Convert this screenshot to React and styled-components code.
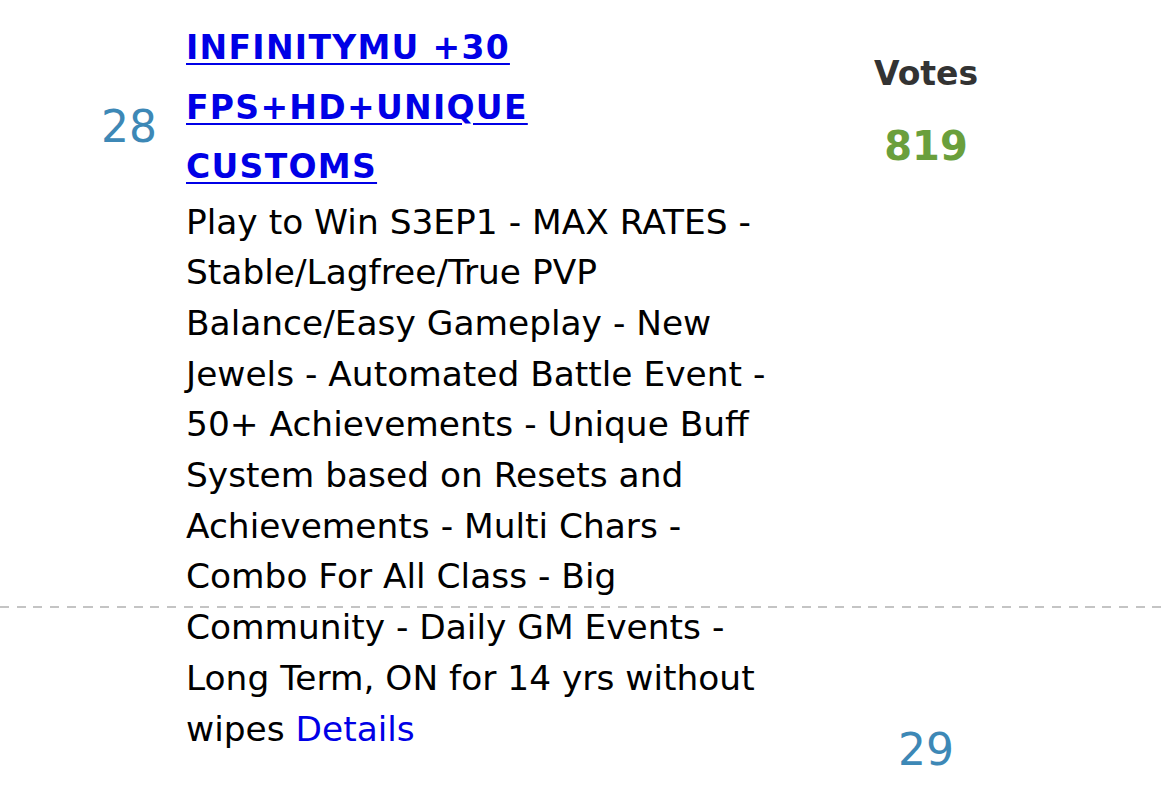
import React from 'react';
import styled, { createGlobalStyle } from 'styled-components';

const GlobalStyle = createGlobalStyle`
  html, body {
    margin: 0;
    padding: 0;
    background: #fff;
  }
  body {
    font-family: "DejaVu Sans", Verdana, sans-serif;
    color: #000;
  }
`;

const Table = styled.div`
  width: 1165px;
`;

const Row = styled.div`
  display: grid;
  grid-template-columns: 186px 600px 280px 1fr;
  height: ${p => p.height}px;
  padding-bottom: 2px;
  background-image: ${p =>
    p.dashed
      ? 'repeating-linear-gradient(to right, #c4c4c4 0 9px, transparent 9px 16.7px)'
      : 'none'};
  background-size: 100% 2px;
  background-position: left bottom;
  background-repeat: no-repeat;
`;

const Rank = styled.div`
  grid-column: ${p => p.column || 1};
  font-size: 44px;
  line-height: 1;
  color: #3d88b6;
  text-align: ${p => (p.column ? 'center' : 'right')};
  padding-right: ${p => (p.column ? 0 : 29)}px;
  padding-top: ${p => p.top}px;
`;

const Content = styled.div`
  padding-top: 18px;
`;

const Title = styled.a`
  display: block;
  max-width: 460px;
  font-size: 33px;
  font-weight: bold;
  letter-spacing: 1.3px;
  line-height: 59.5px;
  color: #0000e6;
  text-decoration: underline;
  text-decoration-thickness: 2px;
  text-underline-offset: 4px;
`;

const Description = styled.div`
  font-size: 34.4px;
  line-height: 50.7px;
  color: #000;
`;

const Details = styled.a`
  color: #0000e6;
  text-decoration: none;
`;

const VotesCell = styled.div`
  display: flex;
  flex-direction: column;
  align-items: center;
  padding-top: 53px;
`;

const VotesLabel = styled.div`
  font-size: 33px;
  font-weight: bold;
  line-height: 42px;
  color: #333;
`;

const VotesCount = styled.div`
  margin-top: 27px;
  font-size: 40px;
  font-weight: bold;
  line-height: 48px;
  color: #6a9f3c;
`;

export default function App() {
  return (
    <>
      <GlobalStyle />
      <Table>
        <Row height={606} dashed>
          <Rank top={105}>28</Rank>
          <Content>
            <Title href="#">INFINITYMU +30 FPS+HD+UNIQUE CUSTOMS</Title>
            <Description>
              Play to Win S3EP1 - MAX RATES - Stable/Lagfree/True PVP
              Balance/Easy Gameplay - New Jewels - Automated Battle Event - 50+
              Achievements - Unique Buff System based on Resets and Achievements
              - Multi Chars - Combo For All Class - Big Community - Daily GM
              Events - Long Term, ON for 14 yrs without wipes{' '}
              <Details href="#">Details</Details>
            </Description>
          </Content>
          <VotesCell>
            <VotesLabel>Votes</VotesLabel>
            <VotesCount>819</VotesCount>
          </VotesCell>
        </Row>
        <Row height={190}>
          <Rank column={3} top={120}>29</Rank>
        </Row>
      </Table>
    </>
  );
}
